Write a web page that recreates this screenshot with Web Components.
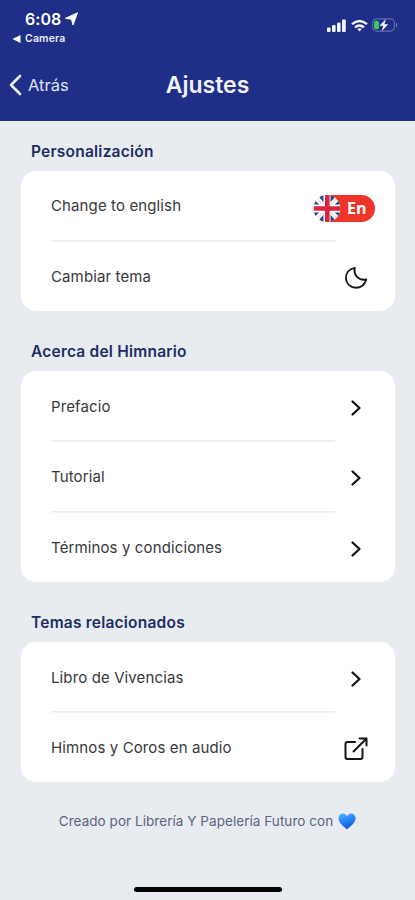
<!DOCTYPE html>
<html lang="es">
<head>
<meta charset="utf-8">
<title>Ajustes</title>
<style>
html,body{margin:0;height:100%}
body{background:#e8ecf1;font-family:Inter,"Liberation Sans",sans-serif;overflow:hidden}
</style>
</head>
<body>
<settings-screen></settings-screen>
<script>
const define = (name, html, setup) => {
  const t = document.createElement('template');
  t.innerHTML = html;
  customElements.define(name, class extends HTMLElement {
    connectedCallback() {
      if (this.shadowRoot) return;
      this.attachShadow({mode: 'open'}).append(t.content.cloneNode(true));
      if (setup) setup(this, this.shadowRoot);
    }
  });
};

const icons = {
  chevron: '<svg width="24" height="24" viewBox="0 0 24 24" fill="none" stroke="#151517" stroke-width="2.3" stroke-linecap="round" stroke-linejoin="round"><path d="M8.500 5.500 15.500 12l-7 6.500"/></svg>',
  moon: '<svg width="24" height="24" viewBox="0 0 24 24" fill="none" stroke="#151517" stroke-width="1.900" stroke-linecap="round" stroke-linejoin="round"><path d="M10.800 1.900C5 3 1.700 7.200 1.900 12.500c.3 5.200 4.700 9.300 10 9.300 5 0 8.900-3 10.400-8.500-2.800.8-6.300.5-9-2.200-2.600-2.600-3.300-5.700-2.500-9.200Z"/></svg>',
  external: '<svg width="24" height="24" viewBox="0 0 24 24" fill="none" stroke="#151517" stroke-width="2" stroke-linecap="round" stroke-linejoin="round"><path d="M11 5H3.500Q1.500 5 1.500 7v13q0 2 2 2h13q2 0 2-2v-8"/><path d="M9.500 14.500 22 2M15.500 1.500h7v7"/></svg>'
};

define('status-bar', `<style>
:host{display:flex;justify-content:space-between;height:50px;color:#fff;box-sizing:border-box;padding:9px 17px 0 12px}
.time{display:flex;align-items:center;gap:4px;height:19px;padding-left:13px;font-weight:600;font-size:16px;letter-spacing:.05px}
.back{display:flex;align-items:center;gap:4px;height:21px;font-size:10.500px;font-weight:600;letter-spacing:.15px;color:#e6e9fa}
svg{display:block;flex:none}
.sys{display:flex;align-items:center;height:16px;margin-top:8px;gap:4.500px}
</style>
<div><div class="time"><span>6:08</span><svg width="13" height="14" viewBox="0 0 13 14"><path d="M12.500.8 8 13 6.500 7.300.5 6.300Z" fill="#fff" stroke="#fff" stroke-linejoin="round"/></svg></div>
<div class="back"><svg width="9" height="8" viewBox="0 0 9 8"><path d="M8.500 0v8L.5 4Z" fill="#fff"/></svg><span>Camera</span></div></div>
<div class="sys">
<svg width="19" height="13" viewBox="0 0 19 13" fill="#f1f3ff"><rect y="8.500" width="3.600" height="4.500" rx="1"/><rect x="5" y="6" width="3.600" height="7" rx="1"/><rect x="10" y="3.500" width="3.600" height="9.500" rx="1"/><rect x="15" y=".5" width="3.800" height="12.500" rx="1"/></svg>
<svg width="17" height="13" viewBox="0 0 17 13" fill="none" stroke="#f1f3ff" stroke-width="2.400"><path d="M1 5.200q7.500-6.600 15 0M4 8.300q4.500-3.800 9 0"/><path d="m8.500 12.500-2.300-2.400q2.300-1.600 4.600 0Z" fill="#f1f3ff" stroke="none"/></svg>
<svg width="26" height="14" viewBox="0 0 27 14"><rect x=".7" y=".7" width="22.600" height="12.600" rx="4" fill="none" stroke="#5f6bac" stroke-width="1.200"/><rect x="2.200" y="2.500" width="5" height="9" rx="1.800" fill="#35cf5b"/><path d="M25 4.500q2.400 2.500 0 5Z" fill="#7c87bd"/><path d="M14.500.8 7.800 7.900h4l-1.900 5.500 7-7.300h-4.100Z" fill="#fff"/></svg>
</div>`);

define('nav-header', `<style>
:host{display:grid;grid-template-columns:1fr auto 1fr;align-items:center;height:69px;color:#fff}
.back{display:flex;align-items:center;gap:6px;padding-left:9px;font-size:16.500px;color:#dfe3f8}
svg{display:block}
h1{margin:0;font-size:23px;font-weight:600;line-height:28px;color:#f1f3ff}
</style>
<div class="back"><svg width="13" height="22" viewBox="0 0 13 22" fill="none" stroke="#f4f5ff" stroke-width="2.600" stroke-linecap="round" stroke-linejoin="round"><path d="M11 2 2 11l9 9"/></svg><span>Atrás</span></div>
<h1><slot></slot></h1>`);

define('settings-section', `<style>
:host{display:block;padding:0 20px 0 21px;margin-bottom:10px}
h2{margin:0;height:50px;box-sizing:border-box;padding:10px 0 0 10px;font-size:15.500px;line-height:41px;letter-spacing:.22px;font-weight:600;color:#202c63}
.card{background:#fff;border-radius:15px;overflow:hidden}
</style>
<h2></h2><div class="card"><slot></slot></div>`, (el, root) => {
  root.querySelector('h2').textContent = el.getAttribute('heading');
});

define('settings-row', `<style>
:host{display:flex;align-items:center;justify-content:space-between;height:69.400px;box-sizing:border-box;padding:0 20px 0 30px;font-size:15px;letter-spacing:.12px;color:#38383b}
:host(:not(:last-child)){height:70.800px;padding-bottom:1px;background:linear-gradient(#ebecef,#ebecef) 30px 69px/284px 1.500px no-repeat}
.icon{flex:none;width:62px;display:flex;justify-content:center;margin-right:-12px;padding-top:3px}
:host([icon=lang]) .icon{margin-right:0;padding-top:5px}
svg{display:block}
span{white-space:nowrap}
</style><span><slot></slot></span><div class="icon"></div>`, (el, root) => {
  const name = el.getAttribute('icon');
  root.querySelector('.icon').innerHTML = name === 'lang' ? '<language-switch></language-switch>' : icons[name];
});

define('language-switch', `<style>
:host{display:flex;align-items:center;box-sizing:border-box;width:62px;height:27px;border-radius:0 14px 14px 0;background:linear-gradient(90deg,transparent 15px,#ef3428 15px);color:#fff;font:700 16px/27px "Open Sans",sans-serif}
svg{display:block;flex:none;margin-right:6px}
</style><svg width="28" height="27" viewBox="0 0 28 28"><defs><clipPath id="c"><circle cx="14" cy="14" r="14"/></clipPath></defs><g clip-path="url(#c)"><rect width="28" height="28" fill="#fff"/><path d="M4 0 10.300 7.500V0ZM24 0 17.700 7.500V0ZM4 28l6.300-7.500V28ZM24 28l-6.300-7.500V28ZM0 4.500 6 9.800H0ZM28 4.500 22 9.800h6ZM0 23.500l6-5.300H0ZM28 23.500l-6-5.300h6Z" fill="#263f88"/><path d="M3 3l6.500 6.500M25 3l-6.500 6.500M3 25l6.500-6.500M25 25l-6.500-6.500" stroke="#f3a6b0" stroke-width=".8"/><path d="M14.300 0v28M0 14h28" stroke="#d9243c" stroke-width="4.800"/></g></svg><span>En</span>`);

define('app-footer', `<style>
:host{display:flex;justify-content:center;align-items:center;gap:5px;height:60px;font-size:13.500px;letter-spacing:.05px;color:#5b6380}
svg{display:block}
</style><span><slot></slot></span><svg width="18" height="17" viewBox="0 0 18 17"><defs><linearGradient id="h" x1="0" y1="0" x2=".3" y2="1"><stop stop-color="#55b4fb"/><stop offset=".5" stop-color="#2586f5"/><stop offset="1" stop-color="#145be0"/></linearGradient></defs><path d="M9 16.500C5.500 13.500.5 10 .5 5.300.5 2.500 2.500.6 4.800.6 6.900.6 8.300 1.800 9 3.600 9.700 1.800 11.100.6 13.200.6c2.300 0 4.300 1.900 4.300 4.700 0 4.700-5 8.200-8.500 11.200Z" fill="url(#h)"/></svg>`);

define('home-indicator', `<style>
:host{display:flex;justify-content:center;margin-top:auto;padding-bottom:8px}
i{display:block;width:148px;height:5px;border-radius:3px;background:#050506}
</style><i></i>`);

define('settings-screen', `<style>
:host{display:flex;flex-direction:column;height:100vh}
header{height:121px;background:#1f2e86;flex:none}
app-footer{margin-top:-1px}
</style>
<header><status-bar></status-bar><nav-header>Ajustes</nav-header></header>
<settings-section heading="Personalización">
<settings-row icon="lang">Change to english</settings-row><settings-row icon="moon">Cambiar tema</settings-row></settings-section>
<settings-section heading="Acerca del Himnario">
<settings-row icon="chevron">Prefacio</settings-row><settings-row icon="chevron">Tutorial</settings-row><settings-row icon="chevron">Términos y condiciones</settings-row></settings-section>
<settings-section heading="Temas relacionados">
<settings-row icon="chevron">Libro de Vivencias</settings-row><settings-row icon="external">Himnos y Coros en audio</settings-row></settings-section>
<app-footer>Creado por Librería Y Papelería Futuro con</app-footer>
<home-indicator></home-indicator>`);
</script>
</body>
</html>
